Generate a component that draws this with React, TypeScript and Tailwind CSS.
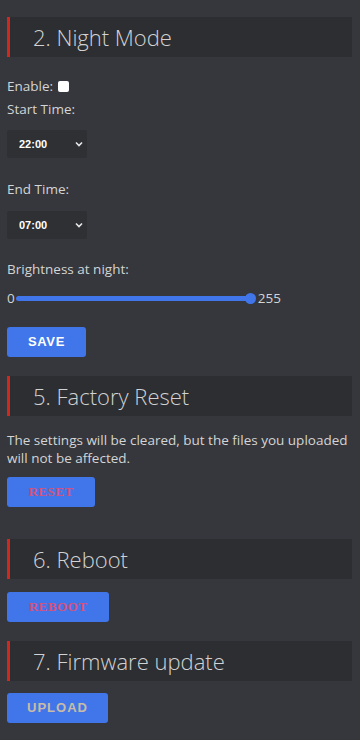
import React from 'react';

const Heading: React.FC<{ title: string; className?: string }> = ({ title, className }) => (
  <h2
    className={`h-[40px] flex items-center border-l-[3px] border-[#d0281f] bg-[#2c2e32] pl-[23px] text-[22px] font-light text-[#d2d2d2] ${className ?? ''}`}
    style={{ fontFamily: '"Open Sans", "Noto Sans", sans-serif' }}
  >
    {title}
  </h2>
);

const TimeSelect: React.FC<{ value: string; className?: string }> = ({ value, className }) => (
  <div className={`relative w-[80px] h-[28px] bg-[#2e3034] rounded-[2px] ${className ?? ''}`}>
    <select
      defaultValue={value}
      className="appearance-none w-full h-full bg-transparent pl-[12px] text-[11px] font-semibold text-white outline-none"
      style={{ fontFamily: '"Liberation Sans", Arial, sans-serif' }}
    >
      <option value={value}>{value}</option>
    </select>
    {/* chevron */}
    <svg className="absolute right-[4px] top-[11px] pointer-events-none" width="8" height="6" viewBox="0 0 8 6">
      <path d="M1 1.5 L4 4.5 L7 1.5" fill="none" stroke="#e8e8e8" strokeWidth="1.6" />
    </svg>
  </div>
);

const Button: React.FC<{ label: string; width: string; textClass: string; serif?: boolean; className?: string }> = ({
  label,
  width,
  textClass,
  serif,
  className,
}) => (
  <button
    className={`${width} h-[30px] rounded-[3px] bg-[#4176ea] text-[13px] font-bold ${textClass} ${className ?? ''}`}
    style={{ fontFamily: serif ? '"Liberation Serif", serif' : '"Liberation Sans", Arial, sans-serif' }}
  >
    {label}
  </button>
);

export default function App() {
  return (
    <div
      className="min-h-[740px] bg-[#35373c] pl-[7px] pr-[8px] pt-[17px] pb-[20px] text-[13.5px] text-[#d4d4d4]"
      style={{ fontFamily: '"Open Sans", "Noto Sans", sans-serif' }}
    >
      <Heading title="2. Night Mode" />

      <div className="mt-[19px] h-[20px] flex items-center">
        Enable:
        <span className="ml-[5px] w-[11px] h-[11px] rounded-[2px] bg-white" />
      </div>
      <div className="mt-[3px] h-[20px] flex items-center">Start Time:</div>
      <TimeSelect value="22:00" className="mt-[11px]" />

      <div className="mt-[21px] h-[20px] flex items-center">End Time:</div>
      <TimeSelect value="07:00" className="mt-[12px]" />

      <div className="mt-[20px] h-[20px] flex items-center">Brightness at night:</div>
      <div className="mt-[9px] h-[20px] flex items-center">
        <span>0</span>
        <div className="relative ml-[1px] w-[235px] h-[5px] rounded-full bg-[#4176ea]">
          <span className="absolute right-[-5px] top-[-3px] w-[11px] h-[11px] rounded-full bg-[#4176ea]" />
        </div>
        <span className="ml-[7px]">255</span>
      </div>

      <Button label="SAVE" width="w-[79px]" textClass="text-white tracking-[0.6px]" className="mt-[19px]" />

      <Heading title="5. Factory Reset" className="mt-[19px]" />
      <p className="mt-[15px] leading-[18px]">
        The settings will be cleared, but the files you uploaded will not be affected.
      </p>
      <Button label="RESET" width="w-[88px]" textClass="text-[#d9507a] tracking-[0.5px]" serif className="mt-[10px]" />

      <Heading title="6. Reboot" className="mt-[32px]" />
      <Button label="REBOOT" width="w-[102px]" textClass="text-[#d9507a] tracking-[0.5px]" serif className="mt-[13px]" />

      <Heading title="7. Firmware update" className="mt-[19px]" />
      <Button label="UPLOAD" width="w-[101px]" textClass="text-[#c9bca6] tracking-[1px]" className="mt-[12px]" />
    </div>
  );
}
